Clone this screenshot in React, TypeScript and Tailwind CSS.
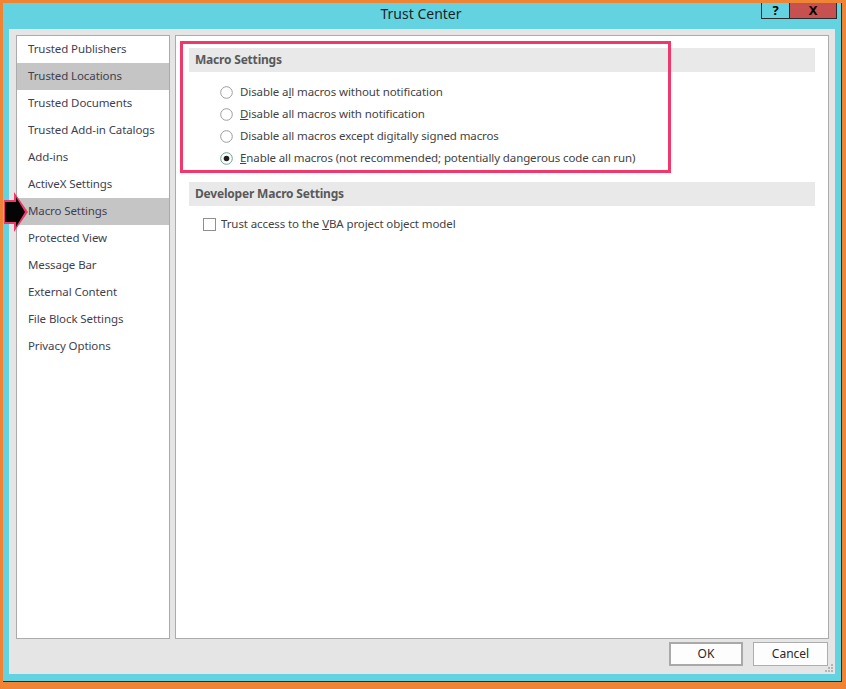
import React from "react";

const NAV = [
  "Trusted Publishers",
  "Trusted Locations",
  "Trusted Documents",
  "Trusted Add-in Catalogs",
  "Add-ins",
  "ActiveX Settings",
  "Macro Settings",
  "Protected View",
  "Message Bar",
  "External Content",
  "File Block Settings",
  "Privacy Options",
];

const HIGHLIGHT = ["Trusted Locations", "Macro Settings"];

function Radio({ checked }: { checked?: boolean }) {
  return (
    <svg width="13" height="13" viewBox="0 0 13 13" className="shrink-0">
      <circle cx="6.5" cy="6.5" r="5.8" fill="#fff" stroke={checked ? "#6aa58a" : "#9c9c9c"} strokeWidth="1" />
      {checked && <circle cx="6.5" cy="6.5" r="2.8" fill="#1f1f1f" />}
    </svg>
  );
}

function Option({ children, checked }: { children: React.ReactNode; checked?: boolean }) {
  return (
    <div className="flex items-center h-[22px] pl-[44px] gap-[7px]">
      <Radio checked={checked} />
      <span className="text-[11.5px] tracking-[-0.1px] text-[#434343]">{children}</span>
    </div>
  );
}

function SectionHeader({ children }: { children: React.ReactNode }) {
  return (
    <div className="mx-[13px] h-[24px] bg-[#e9e9e9] flex items-center px-[6px] text-[12px] tracking-[-0.2px] font-bold text-[#595959]">
      {children}
    </div>
  );
}

export default function App() {
  return (
    <div
      className="w-[846px] h-[689px] bg-[#ee8434] pt-[3px] pl-[3px] overflow-hidden relative"
      style={{ fontFamily: '"Noto Sans", "Open Sans", sans-serif' }}
    >
      <div className="w-[839px] h-[679px] bg-[#63d3e1] border-r border-b border-[#2b2b2b] flex flex-col">
        {/* title bar */}
        <div className="h-[26px] relative flex items-center justify-center shrink-0">
          <span className="text-[14px] text-[#1e1e1e] ml-[-2px] mt-[-5px]">Trust Center</span>
          <div className="absolute right-[4px] top-0 flex h-[16px]">
            <div className="w-[29px] h-full border border-t-0 border-[#2b2b2b] flex items-center justify-center text-[13px] font-bold text-black leading-none">
              ?
            </div>
            <div className="w-[47px] h-full bg-[#c75050] border border-l-0 border-t-0 border-[#2b2b2b] flex items-center justify-center text-[13px] font-bold text-black leading-none">
              X
            </div>
          </div>
        </div>

        {/* content */}
        <div className="ml-[6px] w-[826px] h-[645px] bg-[#e5e5e5] flex flex-col pt-[6px] pl-[7px] relative">
          <div className="flex gap-[5px] h-[604px]">
            {/* nav */}
            <div className="w-[154px] h-full bg-white border border-[#ababab]">
              {NAV.map((n) => (
                <div
                  key={n}
                  className={`h-[27px] flex items-center pl-[11px] pb-[1px] text-[11.5px] tracking-[-0.1px] text-[#3f3f4f] ${
                    HIGHLIGHT.includes(n) ? "bg-[#c5c5c5]" : ""
                  }`}
                >
                  {n}
                </div>
              ))}
            </div>

            {/* main */}
            <div className="w-[654px] h-full bg-white border border-[#ababab] pt-[12px] relative">
              <SectionHeader>Macro Settings</SectionHeader>
              <div className="mt-[9px]">
                <Option>
                  Disable a<u>l</u>l macros without notification
                </Option>
                <Option>
                  <u>D</u>isable all macros with notification
                </Option>
                <Option>
                  Disable all macros except di<u>g</u>itally signed macros
                </Option>
                <Option checked>
                  <u>E</u>nable all macros (not recommended; potentially dangerous code can run)
                </Option>
              </div>

              <div className="mt-[13px]">
                <SectionHeader>Developer Macro Settings</SectionHeader>
              </div>
              <div className="flex items-center h-[22px] mt-[7px] pl-[27px] gap-[5px]">
                <div className="w-[13px] h-[13px] border border-[#8f8f8f] bg-white shrink-0" />
                <span className="text-[11.5px] tracking-[-0.1px] text-[#434343]">
                  Trust access to the <u>V</u>BA project object model
                </span>
              </div>

              {/* annotation box */}
              <div className="absolute left-[4px] top-[5px] w-[491px] h-[132px] border-[3px] border-[#f2386a] pointer-events-none" />
            </div>
          </div>

          {/* buttons */}
          <div className="flex justify-end gap-[10px] pr-[7px] mt-[3px]">
            <button className="w-[74px] h-[24px] bg-[#fdfdfd] border-2 border-[#a9a9a9] text-[12px] text-[#2a2a2a]">
              OK
            </button>
            <button className="w-[75px] h-[24px] bg-[#fdfdfd] border border-[#adadad] text-[12px] text-[#2a2a2a]">
              Cancel
            </button>
          </div>

          {/* resize grip */}
          <svg className="absolute right-[2px] bottom-[2px]" width="8" height="8" viewBox="0 0 8 8">
            <rect x="6" y="0" width="2" height="2" fill="#b5b5b5" />
            <rect x="3" y="3" width="2" height="2" fill="#b5b5b5" />
            <rect x="6" y="3" width="2" height="2" fill="#b5b5b5" />
            <rect x="0" y="6" width="2" height="2" fill="#b5b5b5" />
            <rect x="3" y="6" width="2" height="2" fill="#b5b5b5" />
            <rect x="6" y="6" width="2" height="2" fill="#b5b5b5" />
          </svg>
        </div>
      </div>

      {/* annotation arrow */}
      <svg className="absolute left-0 top-0" width="30" height="240" viewBox="0 0 30 240">
        <polygon points="4,200 14,200 14,192 28,212 14,232 14,224 4,224" fill="#f2386a" />
        <polygon points="5,202 16,202 16,197 25,212 16,227 16,222 5,222" fill="#050505" />
      </svg>
    </div>
  );
}
